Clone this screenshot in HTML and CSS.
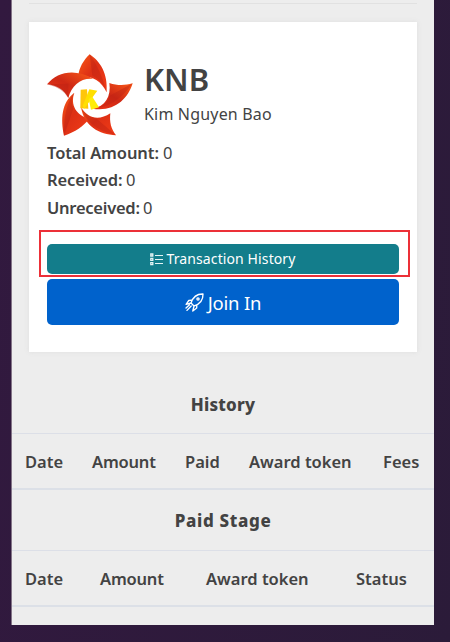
FILE: index.html
```html
<!DOCTYPE html>
<html lang="en">
<head>
<meta charset="utf-8">
<title>KNB</title>
<link rel="stylesheet" href="styles.css">
</head>
<body>
<main class="panel">
  <hr class="divider">
  <section class="card">
    <header class="token">
      <svg class="logo" viewBox="21 21 264 252" aria-hidden="true">
        <defs>
          <linearGradient id="flame" x1="0" y1="0" x2="1" y2="1"><stop offset="0" stop-color="#fa5a15"/><stop offset=".45" stop-color="#dd3015"/><stop offset="1" stop-color="#f33c17"/></linearGradient>
          <linearGradient id="ember" x1="0" y1="1" x2="1" y2="0"><stop offset="0" stop-color="#ef3516"/><stop offset=".5" stop-color="#cf2915"/><stop offset="1" stop-color="#fb5a18"/></linearGradient>
        </defs>
        <path fill="url(#flame)" d="M152 25C184 47 207 82 203 139C187 105 161 89 118 90C120 66 133 43 152 25Z"/>
        <path fill="url(#ember)" d="M24 115C55 78 107 66 163 99C126 95 98 118 88 156C75 132 56 118 24 115Z"/>
        <path fill="url(#ember)" d="M281 112C266 161 224 199 160 188C199 182 217 151 211 111C235 119 257 119 281 112Z"/>
        <path fill="url(#flame)" d="M75 269C65 220 67 169 106 140C93 177 112 208 151 218C133 241 109 257 75 269Z"/>
        <path fill="url(#flame)" d="M231 268C180 265 136 242 126 184C146 218 180 225 214 202C211 228 216 249 231 268Z"/>
        <path fill="#b92013" opacity=".4" d="M152 25L160 89Q188 101 203 139Q185 70 152 25ZM24 115L88 113L88 156Q72 127 24 115ZM281 112L212 149Q204 180 160 188Q230 185 281 112ZM75 269L103 188Q93 163 106 140Q73 180 75 269ZM231 268L173 218Q145 215 126 184Q145 249 231 268Z"/>
        <path fill="#ffc60a" d="M125 131L144 130L148 188L124 187Z"/>
        <path fill="#ffdf00" d="M151 130L175 134L153 164L136 188L131 180Z"/>
        <path fill="#ffed08" d="M149 159L160 152L180 184L156 191Z"/>
      </svg>
      <div class="title"><h1><span>KNB</span></h1><p><span>Kim Nguyen Bao</span></p></div>
    </header>
    <dl class="totals">
      <div><dt class="total">Total Amount:</dt><dd>0</dd></div>
      <div><dt class="received">Received:</dt><dd>0</dd></div>
      <div><dt class="unreceived">Unreceived:</dt><dd>0</dd></div>
    </dl>
    <div class="actions">
      <button class="button history-button">
        <svg width="13" height="13" viewBox="0 0 13 13" fill="none" stroke="#e5f4f5" aria-hidden="true"><path stroke-width="1.3" d="M.8 1h2v2h-2zM.8 5.3h2v2h-2zM.8 9.6h2v2h-2z"/><path d="M5 2.5h8M5 6.5h8M5 10.5h8"/></svg>
        <span>Transaction History</span>
      </button>
      <button class="button join-button">
        <svg width="19" height="19" viewBox="0 0 19 19" fill="none" stroke="#fff" stroke-width="1.35" stroke-linejoin="round" stroke-linecap="round" aria-hidden="true"><path d="M6 10C8 4 12 .8 18 1C18.2 7 15 11 9 13ZM6.7 7.2L3.8 7.5L1.1 11.4L6 10M11.8 12.2L11.7 15L7.8 18L9 13M4.5 11.7L1 15.1M6.2 13L2 17.4"/><circle cx="13" cy="6" r="1.1"/></svg>
        <span>Join In</span>
      </button>
      <div class="highlight"></div>
    </div>
  </section>
  <section class="record history">
    <h2><span>History</span></h2>
    <div class="columns"><span class="date">Date</span><span class="amount">Amount</span><span class="paid">Paid</span><span class="award">Award token</span><span class="fees">Fees</span></div>
  </section>
  <section class="record stage">
    <h2><span>Paid Stage</span></h2>
    <div class="columns"><span class="date">Date</span><span class="amount">Amount</span><span class="award">Award token</span><span class="status">Status</span></div>
  </section>
</main>
</body>
</html>
```
FILE: styles.css
```css
* { box-sizing: border-box; }
body {
  margin: 0;
  height: 642px;
  overflow: hidden;
  background: linear-gradient(100deg, #32193f, #2b1b39);
  color: #434343;
  font-family: "Noto Sans", "Open Sans", sans-serif;
  font-size: 16.5px;
}
h1, h2, p, dl, dd { margin: 0; }
.panel {
  width: 422px;
  height: 625px;
  margin-left: 12px;
  padding-top: 3px;
  background: #ededed;
  box-shadow: -1px 0 #837487;
}
.divider { height: 1px; margin: 0 17px 18px; border: 0; background: #e1e1e1; }
.card {
  width: 388px;
  height: 330px;
  margin-left: 17px;
  padding: 31px 18px 0;
  background: #fff;
  box-shadow: 0 0 5px #dedede;
}
.token { display: flex; height: 86px; }
.logo { width: 88px; height: 84px; margin-left: -1px; }
.title { margin-left: 10px; white-space: nowrap; }
h1 { height: 50px; font-size: 31px; line-height: 53px; font-weight: 600; }
.title p { font-size: 16px; line-height: 22px; letter-spacing: .18px; }
.totals { letter-spacing: -.1px; }
.totals > div { display: flex; height: 27.4px; line-height: 27px; gap: 5px; }
dt { font-weight: 600; white-space: nowrap; }
.total { width: 111px; }
.received { width: 74px; }
.unreceived { width: 91px; letter-spacing: -.25px; }
.actions { position: relative; margin-top: 23px; }
.button {
  display: flex;
  align-items: center;
  justify-content: center;
  width: 100%;
  padding: 0;
  border: 0;
  border-radius: 5px;
  color: #fff;
  font-family: inherit;
}
.history-button { height: 30px; gap: 3px; margin-bottom: 5px; background: #137d8b; font-size: 14px; letter-spacing: .11px; }
.history-button span { position: relative; top: -1px; }
.join-button { height: 46px; gap: 4px; background: #0062cc; font-size: 18.5px; letter-spacing: -.2px; }
.highlight { position: absolute; left: -8px; top: -14px; width: 371px; height: 47px; border: 2px solid #ec3038; }
.record h2 { display: flex; align-items: center; justify-content: center; font-size: 17px; font-weight: 800; letter-spacing: .2px; }
.history h2 { height: 81px; padding-top: 23px; }
.stage h2 { height: 60px; letter-spacing: .65px; }
.columns {
  display: grid;
  align-items: center;
  height: 57px;
  padding-left: 13px;
  border-top: 1px solid #dcdfe7;
  border-bottom: 2px solid #dce0e7;
  font-weight: 600;
  font-size: 16.5px;
  white-space: nowrap;
}
.history .columns { grid-template-columns: 67px 93px 64px 134px 1fr; }
.stage .columns { grid-template-columns: 75px 106px 150px 1fr; }
.columns .amount { letter-spacing: -.2px; }
```
